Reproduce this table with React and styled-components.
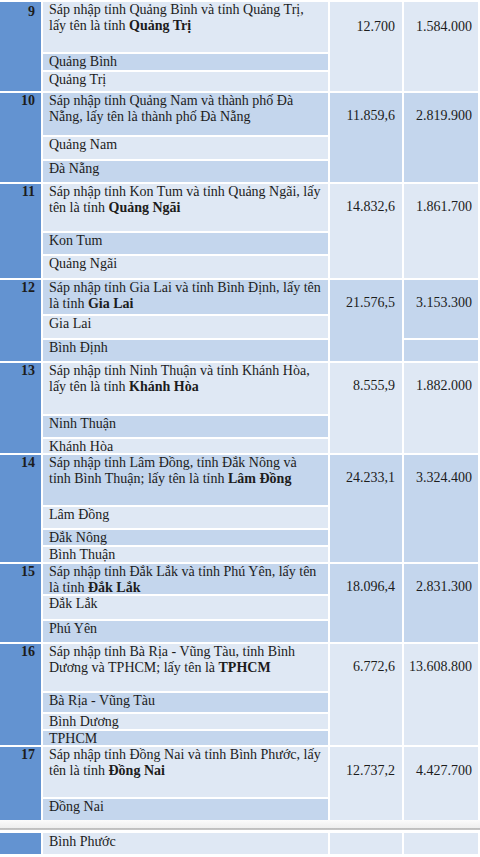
import React from "react";
import styled, { createGlobalStyle } from "styled-components";

const LIGHT = "#dfe8f4";
const MEDIUM = "#c4d6ed";
const BLUE = "#6393d1";

const Global = createGlobalStyle`
  html, body { margin: 0; padding: 0; background: #ffffff; }
  body {
    font-family: "Liberation Serif", "Times New Roman", serif;
    font-size: 14px;
    line-height: 16px;
    color: #1c1c1c;
  }
`;

const Page = styled.div`
  width: 480px;
  height: 857px;
  overflow: hidden;
  display: flex;
  flex-direction: column;
`;

const Table = styled.div`
  display: flex;
  flex-direction: column;
  gap: 2px;
  padding-top: ${(p) => p.$top || 0}px;
`;

const Group = styled.div`
  display: grid;
  grid-template-columns: 41px 285px 72px 74px;
  grid-template-rows: ${(p) => p.$rows};
  gap: 2px;
`;

const NumCell = styled.div`
  grid-column: 1;
  grid-row: 1 / -1;
  background: ${BLUE};
  font-weight: bold;
  text-align: right;
  padding: ${(p) => p.$top || 0}px 6px 0 0;
`;

const TextCell = styled.div`
  grid-column: 2;
  background: ${(p) => (p.$tone === "m" ? MEDIUM : LIGHT)};
  padding: ${(p) => p.$top || 0}px 4px 0 6px;
  white-space: nowrap;
  overflow: visible;
`;

const ValueCell = styled.div`
  grid-column: ${(p) => p.$col};
  grid-row: ${(p) => p.$span};
  background: ${(p) => (p.$tone === "m" ? MEDIUM : LIGHT)};
  text-align: right;
  padding: ${(p) => p.$top}px ${(p) => (p.$col === 3 ? 7 : 6)}px 0 0;
`;

const Band = styled.div`
  height: 13px;
  flex: none;
  background: linear-gradient(
    to bottom,
    #fbfbfb 0px,
    #efefef 7.5px,
    #bdbdbd 8px,
    #c4c4c4 9.5px,
    #ffffff 9.5px
  );
`;

const groups = [
  {
    n: 9, tone: "l", descH: 50, valTop: 17, numTop: 2,
    lines: [["Sáp nhập tỉnh Quảng Bình và tỉnh Quảng Trị,"], ["lấy tên là tỉnh ", { b: "Quảng Trị" }]],
    subs: [["Quảng Bình", 16], ["Quảng Trị", 19]],
    area: "12.700", pop: "1.584.000",
  },
  {
    n: 10, tone: "m", descH: 42, valTop: 15,
    lines: [["Sáp nhập tỉnh Quảng Nam và thành phố Đà"], ["Nẵng, lấy tên là thành phố Đà Nẵng"]],
    subs: [["Quảng Nam", 22], ["Đà Nẵng", 21]],
    area: "11.859,6", pop: "2.819.900",
  },
  {
    n: 11, tone: "l", descH: 47, valTop: 15,
    lines: [["Sáp nhập tỉnh Kon Tum và tỉnh Quảng Ngãi, lấy"], ["tên là tỉnh ", { b: "Quảng Ngãi" }]],
    subs: [["Kon Tum", 21], ["Quảng Ngãi", 22]],
    area: "14.832,6", pop: "1.861.700",
  },
  {
    n: 12, tone: "m", descH: 34, valTop: 15, popSplit: 2,
    lines: [["Sáp nhập tỉnh Gia Lai và tỉnh Bình Định, lấy tên"], ["là tỉnh ", { b: "Gia Lai" }]],
    subs: [["Gia Lai", 22], ["Bình Định", 21]],
    area: "21.576,5", pop: "3.153.300",
  },
  {
    n: 13, tone: "l", descH: 51, valTop: 15,
    lines: [["Sáp nhập tỉnh Ninh Thuận và tỉnh Khánh Hòa,"], ["lấy tên là tỉnh ", { b: "Khánh Hòa" }]],
    subs: [["Ninh Thuận", 21], ["Khánh Hòa", 14]],
    area: "8.555,9", pop: "1.882.000",
  },
  {
    n: 14, tone: "m", descH: 50, valTop: 15,
    lines: [["Sáp nhập tỉnh Lâm Đồng, tỉnh Đắk Nông và"], ["tỉnh Bình Thuận; lấy tên là tỉnh ", { b: "Lâm Đồng" }]],
    subs: [["Lâm Đồng", 21], ["Đắk Nông", 15], ["Bình Thuận", 15]],
    area: "24.233,1", pop: "3.324.400",
  },
  {
    n: 15, tone: "m", descH: 30, valTop: 15,
    lines: [["Sáp nhập tỉnh Đắk Lắk và tỉnh Phú Yên, lấy tên"], ["là tỉnh ", { b: "Đắk Lắk" }]],
    subs: [["Đắk Lắk", 23], ["Phú Yên", 21]],
    area: "18.096,4", pop: "2.831.300",
  },
  {
    n: 16, tone: "l", descH: 47, valTop: 15,
    lines: [["Sáp nhập tỉnh Bà Rịa - Vũng Tàu, tỉnh Bình"], ["Dương và TPHCM; lấy tên là ", { b: "TPHCM" }]],
    subs: [["Bà Rịa - Vũng Tàu", 19], ["Bình Dương", 15], ["TPHCM", 14]],
    area: "6.772,6", pop: "13.608.800",
  },
  {
    n: 17, tone: "l", descH: 50, valTop: 16,
    lines: [["Sáp nhập tỉnh Đồng Nai và tỉnh Bình Phước, lấy"], ["tên là tỉnh ", { b: "Đồng Nai" }]],
    subs: [["Đồng Nai", 21]],
    area: "12.737,2", pop: "4.427.700",
  },
];

const flip = (t) => (t === "m" ? "l" : "m");

function Line({ parts }) {
  return (
    <>
      {parts.map((p, i) =>
        typeof p === "string" ? <React.Fragment key={i}>{p}</React.Fragment> : <b key={i}>{p.b}</b>
      )}
    </>
  );
}

function MergeGroup({ g }) {
  const rows = [g.descH, ...g.subs.map((s) => s[1])].map((h) => `${h}px`).join(" ");
  let tone = g.tone;
  const total = g.subs.length + 1;
  return (
    <Group $rows={rows}>
      <NumCell $top={g.numTop}>{g.n}</NumCell>
      <TextCell $tone={g.tone}>
        {g.lines.map((l, i) => (
          <React.Fragment key={i}>
            <Line parts={l} />
            {i < g.lines.length - 1 && <br />}
          </React.Fragment>
        ))}
      </TextCell>
      {g.subs.map((s, i) => {
        tone = flip(tone);
        return (
          <TextCell key={i} $tone={tone}>
            {s[0]}
          </TextCell>
        );
      })}
      <ValueCell $col={3} $span="1 / -1" $tone={g.tone} $top={g.valTop}>
        {g.area}
      </ValueCell>
      {g.popSplit ? (
        <>
          <ValueCell $col={4} $span={`1 / ${g.popSplit + 1}`} $tone={g.tone} $top={g.valTop}>
            {g.pop}
          </ValueCell>
          <ValueCell $col={4} $span={`${g.popSplit + 1} / ${total + 1}`} $tone={g.tone} $top={0} />
        </>
      ) : (
        <ValueCell $col={4} $span="1 / -1" $tone={g.tone} $top={g.valTop}>
          {g.pop}
        </ValueCell>
      )}
    </Group>
  );
}

export default function App() {
  return (
    <Page>
      <Global />
      <Table $top={2}>
        {groups.map((g) => (
          <MergeGroup key={g.n} g={g} />
        ))}
      </Table>
      <Band />
      <Table>
        <Group $rows="21px">
          <NumCell />
          <TextCell $tone="l" $top={1}>Bình Phước</TextCell>
          <ValueCell $col={3} $span="1" $tone="l" $top={0} />
          <ValueCell $col={4} $span="1" $tone="l" $top={0} />
        </Group>
      </Table>
    </Page>
  );
}
